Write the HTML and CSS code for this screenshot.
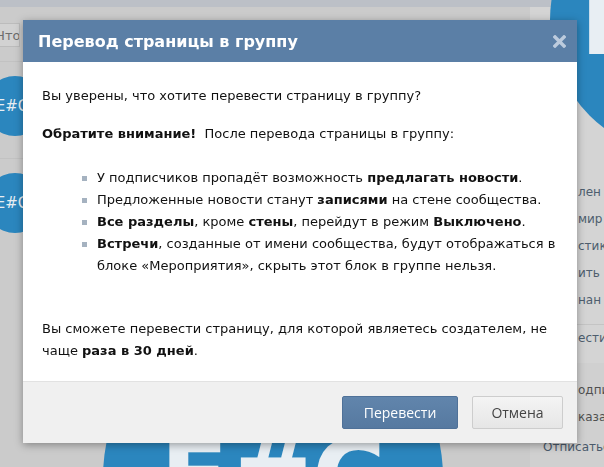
FILE: index.html
```html
<!DOCTYPE html>
<html lang="ru">
<head>
    <meta charset="UTF-8">
    <meta name="viewport" content="width=device-width, initial-scale=1.0">
    <title>Перевод страницы в группу</title>
    <link rel="stylesheet" href="styles.css">
</head>
<body>

    <div class="page">
        <div class="topbar"></div>
        <div class="layout">
            <div class="side-left">
                <div class="search">Что</div>
                <div class="group-row"><div class="ava">E#C</div></div>
                <div class="group-row"><div class="ava">E#C</div></div>
            </div>
            <div class="center">
                <div class="big-ava">E#C</div>
            </div>
            <div class="side-right">
                <div class="top-ava">E#C</div>
                <ul class="menu">
                    <li>лен</li>
                    <li>мир</li>
                    <li>стик</li>
                    <li>ить</li>
                    <li>нан</li>
                    <li class="menu-sep">ести</li>
                </ul>
                <div class="sub-block">
                    <div class="sub-row">одпи</div>
                    <div class="sub-row">казат</div>
                    <div class="sub-row sub-link">Отписаться</div>
                </div>
            </div>
        </div>
    </div>

    <div class="overlay">
        <div class="box">
            <div class="box-head">
                <span class="box-title">Перевод страницы в группу</span>
                <svg class="box-close" width="13" height="13" viewBox="0 0 13 13">
                    <path d="M2 2 L11 11 M11 2 L2 11" stroke="#bccbdd" stroke-width="3.4" stroke-linecap="square"/>
                </svg>
            </div>
            <div class="box-body">
                <p>Вы уверены, что хотите перевести страницу в группу?</p>
                <p><b>Обратите внимание!</b>&nbsp; После перевода страницы в группу:</p>
                <ul class="notes">
                    <li>У подписчиков пропадёт возможность <b>предлагать новости</b>.</li>
                    <li>Предложенные новости станут <b>записями</b> на стене сообщества.</li>
                    <li><b>Все разделы</b>, кроме <b>стены</b>, перейдут в режим <b>Выключено</b>.</li>
                    <li><b>Встречи</b>, созданные от имени сообщества, будут отображаться в<br>блоке «Мероприятия», скрыть этот блок в группе нельзя.</li>
                </ul>
                <p class="last">Вы сможете перевести страницу, для которой являетесь создателем, не<br>чаще <b>раза в 30 дней</b>.</p>
            </div>
            <div class="box-foot">
                <button class="btn btn-primary">Перевести</button>
                <button class="btn btn-cancel">Отмена</button>
            </div>
        </div>
    </div>

</body>
</html>
```

FILE: styles.css
```css
body {
    margin: 0;
    font-family: "DejaVu Sans", Tahoma, sans-serif;
    background: #cbcbcb;
    overflow: hidden;
}

/* page behind the dimmed layer */
.page {
    height: 467px;
    overflow: hidden;
}

.topbar {
    height: 7px;
    background: #bcc0c7;
}

.layout {
    display: flex;
    height: 460px;
}

.side-left {
    width: 60px;
    margin-left: -15px;
    flex-shrink: 0;
}

.search {
    box-sizing: border-box;
    width: 35px;
    height: 24px;
    margin-top: 16px;
    padding: 4px 0 0 10px;
    background: #d2d2d2;
    border: 1px solid #bcbcbc;
    font-size: 13px;
    color: #6d6d6d;
    white-space: nowrap;
    overflow: hidden;
}

.group-row {
    height: 97px;
    padding-top: 14px;
    box-sizing: border-box;
    border-top: 1px solid #c2c2c2;
}

.search + .group-row {
    margin-top: 14px;
}

.ava {
    width: 60px;
    height: 60px;
    border-radius: 50%;
    background: #2b86be;
    color: #e8eef3;
    font-size: 15px;
    line-height: 60px;
    text-align: center;
    text-indent: -6px;
}

.center {
    flex: 1;
}

.big-ava {
    width: 340px;
    height: 340px;
    margin: 300px 0 0 58px;
    border-radius: 50%;
    background: #2b86be;
    color: #e8eef3;
    font-size: 100px;
    font-weight: bold;
    line-height: 340px;
    text-align: center;
}

.side-right {
    width: 74px;
    flex-shrink: 0;
    background: #d4d4d4;
}

.top-ava {
    width: 270px;
    height: 270px;
    margin: -122px 0 0 20px;
    border-radius: 50%;
    background: #2b86be;
    color: #e8eef3;
    font-size: 100px;
    font-weight: bold;
    line-height: 270px;
    text-indent: 30px;
    white-space: nowrap;
}

.menu {
    list-style: none;
    margin: 24px 0 0;
    padding: 0;
}

.menu li {
    height: 27px;
    line-height: 27px;
    padding-left: 48px;
    font-size: 12px;
    color: #4e5e6e;
    white-space: nowrap;
}

.menu .menu-sep {
    margin-top: 10px;
    border-top: 1px solid #c4c4c4;
}

.sub-block {
    margin-top: 11px;
    padding-top: 14px;
    background: #d0d0d0;
    height: 120px;
}

.sub-row {
    height: 27px;
    line-height: 27px;
    padding-left: 48px;
    font-size: 12px;
    color: #505050;
    white-space: nowrap;
}

.sub-row.sub-link {
    margin-top: 3px;
    padding-left: 13px;
    color: #4a5a6b;
}

/* modal */
.overlay {
    position: fixed;
    top: 0;
    left: 0;
    right: 0;
    bottom: 0;
    padding: 20px 0 0 23px;
}

.box {
    width: 554px;
    background: #fff;
    box-shadow: 0 2px 8px rgba(0, 0, 0, 0.35);
}

.box-head {
    display: flex;
    align-items: center;
    justify-content: space-between;
    height: 42px;
    padding: 0 11px 0 15px;
    background: #5b7fa6;
}

.box-title {
    color: #fff;
    font-size: 16px;
    font-weight: bold;
}

.box-body {
    padding: 23px 12px 19px 19px;
    font-size: 13px;
    line-height: 22px;
    color: #111;
}

.box-body p {
    margin: 0 0 16px;
}

.box-body p.last {
    margin: 0;
}

.notes {
    list-style: none;
    margin: 0 0 41px;
    padding: 6px 0 0 55px;
}

.notes li {
    position: relative;
    white-space: nowrap;
}

.notes li::before {
    content: "";
    position: absolute;
    left: -15px;
    top: 9px;
    width: 5px;
    height: 5px;
    background: #a5b2c0;
}

.box-foot {
    display: flex;
    justify-content: flex-end;
    gap: 14px;
    padding: 14px;
    background: #f0f0f0;
    border-top: 1px solid #e2e2e2;
}

.btn {
    height: 33px;
    padding: 0;
    border-radius: 2px;
    font-family: "Open Sans", sans-serif;
    font-size: 14px;
    cursor: pointer;
}

.btn-primary {
    width: 116px;
    background: linear-gradient(#6185ac, #5679a0);
    border: 1px solid #4f7198;
    color: #fff;
}

.btn-cancel {
    width: 91px;
    background: linear-gradient(#f4f4f4, #e6e6e6);
    border: 1px solid #cdcdcd;
    color: #444;
}
```
